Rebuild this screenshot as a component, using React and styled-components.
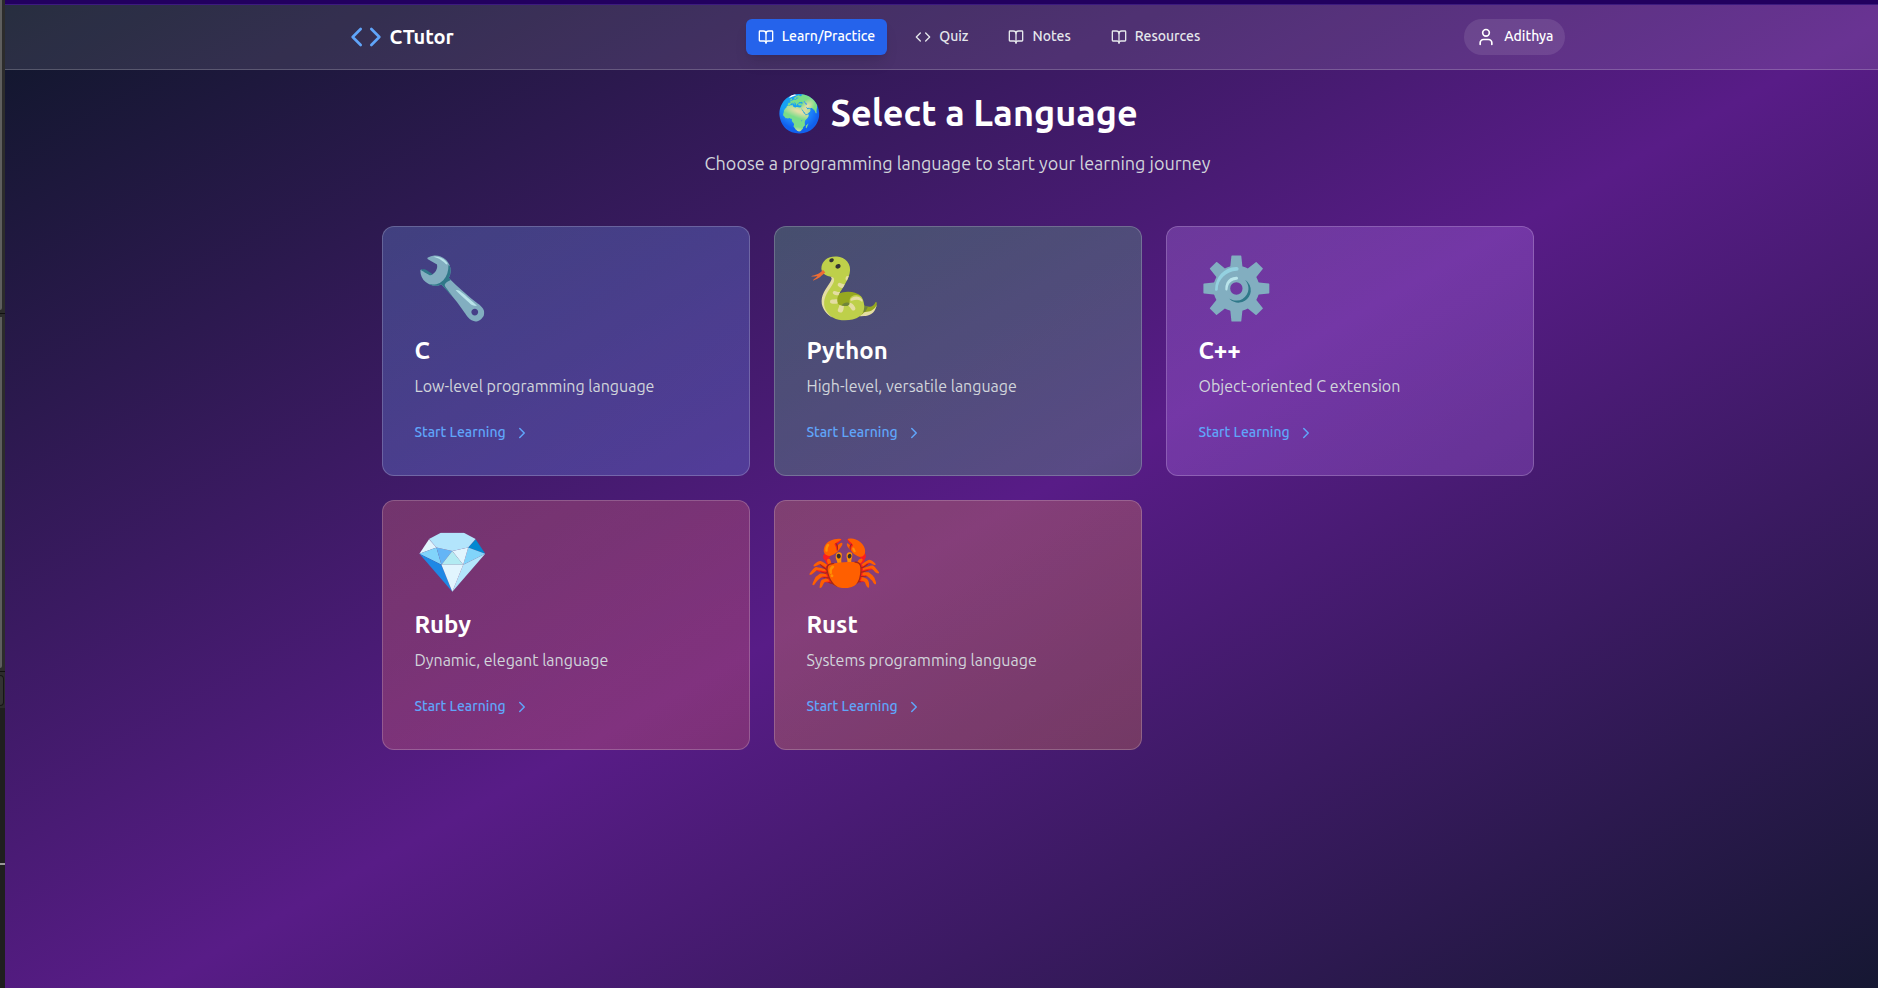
import React from "react";
import styled, { createGlobalStyle } from "styled-components";
import { BookOpen, ChevronRight, Code, User } from "lucide-react";

const GlobalStyle = createGlobalStyle`
  *, *::before, *::after { box-sizing: border-box; }
  body { margin: 0; background: #1f1f1f; }
  h1, h2, p { margin: 0; }
`;

const Screen = styled.div`
  display: flex;
  width: 100%;
  height: 988px;
  overflow: hidden;
  font-family: Ubuntu, "Open Sans", "Noto Color Emoji", sans-serif;
  font-size: 16px;
  line-height: 24px;
  color: #fff;
`;

const EdgeStrip = styled.div`
  flex: none;
  display: flex;
  flex-direction: column;
  width: 5px;
  background: #1f1f1f;
`;

const EdgeDock = styled.div`
  display: flex;
  flex-direction: column;
  gap: 3px;
  height: 708px;
  background: #2c2c2c;
`;

const EdgePanel = styled.div`
  width: 2px;
  height: ${(p) => p.$height}px;
  background: #5e5e5e;
  border-bottom-right-radius: 2px;
`;

const EdgeDivider = styled.div`
  height: 1px;
  background: #111;
`;

const EdgeTab = styled.div`
  width: 4px;
  height: 31px;
  background: #333;
  border: solid #161616;
  border-width: 1px 1px 1px 0;
  border-radius: 0 4px 4px 0;
`;

const EdgeMark = styled.div`
  height: 2px;
  margin-top: 155px;
  background: #989898;
`;

const BrowserPane = styled.div`
  flex: none;
  display: flex;
  flex-direction: column;
  width: 1905px;
`;

const WindowBar = styled.div`
  flex: none;
  height: 5px;
  background: #22005f;
  border-bottom: 1px solid #3d1a7f;
`;

const Page = styled.div`
  flex: none;
  height: 1064px;
  background: linear-gradient(to bottom right, #0f172a, #581c87, #0f172a);
`;

const Header = styled.header`
  height: 65px;
  background: rgba(255, 255, 255, 0.1);
  border-bottom: 1px solid rgba(255, 255, 255, 0.2);
`;

const HeaderInner = styled.div`
  display: flex;
  align-items: center;
  justify-content: space-between;
  max-width: 1280px;
  height: 64px;
  margin: 0 auto;
  padding: 0 32px;
`;

const Brand = styled.div`
  display: flex;
  align-items: center;
  gap: 8px;
  font-size: 20px;
  line-height: 28px;
  font-weight: 700;

  svg { color: #60a5fa; }
`;

const Nav = styled.nav`
  display: flex;
  gap: 16px;
  margin-left: 40px;
`;

const NavItem = styled.a`
  display: flex;
  align-items: center;
  gap: 8px;
  height: 36px;
  padding: 0 12px;
  border-radius: 6px;
  font-size: 14px;
  line-height: 20px;
  font-weight: 500;
  color: ${(p) => (p.$active ? "#fff" : "#e5e7eb")};
  background: ${(p) => (p.$active ? "#2563eb" : "transparent")};
  box-shadow: ${(p) =>
    p.$active
      ? "0 10px 15px -3px rgba(0,0,0,0.1), 0 4px 6px -4px rgba(0,0,0,0.1)"
      : "none"};
`;

const Label = styled.span`
  padding-bottom: 2px;
`;

const UserPill = styled.div`
  display: flex;
  align-items: center;
  gap: 8px;
  height: 36px;
  padding: 0 12px;
  border-radius: 18px;
  background: rgba(255, 255, 255, 0.1);
  font-size: 14px;
  line-height: 20px;
  font-weight: 500;
`;

const Main = styled.main`
  max-width: 1152px;
  margin: 0 auto;
  padding-top: 23px;
`;

const Intro = styled.div`
  margin-bottom: 49px;
  text-align: center;
`;

const Title = styled.h1`
  margin-bottom: 16px;
  font-size: 36px;
  line-height: 40px;
  font-weight: 700;
`;

const Subtitle = styled.p`
  font-size: 18px;
  line-height: 28px;
  color: #d1d5db;
`;

const CardGrid = styled.div`
  display: grid;
  grid-template-columns: repeat(3, 1fr);
  gap: 24px;
`;

const Card = styled.article`
  height: 250px;
  padding: 30px 32px 32px;
  border: 1px solid rgba(255, 255, 255, 0.2);
  border-radius: 12px;
  background:
    linear-gradient(to bottom right, ${(p) => p.$from}, ${(p) => p.$to}),
    rgba(255, 255, 255, 0.1);
`;

const CardEmoji = styled.div`
  height: 60px;
  margin-bottom: 18px;
  padding-left: 1px;
  font-size: 60px;
  line-height: 60px;
`;

const CardTitle = styled.h2`
  margin-bottom: 7px;
  font-size: 24px;
  line-height: 32px;
  font-weight: 700;
`;

const CardText = styled.p`
  margin-bottom: 25px;
  color: #d1d5db;
`;

const CardLink = styled.a`
  display: flex;
  align-items: center;
  gap: 7.5px;
  height: 20px;
  font-size: 14px;
  line-height: 20px;
  font-weight: 500;
  color: #60a5fa;
`;

const navItems = [
  { label: "Learn/Practice", Icon: BookOpen, active: true },
  { label: "Quiz", Icon: Code },
  { label: "Notes", Icon: BookOpen },
  { label: "Resources", Icon: BookOpen },
];

const languages = [
  { name: "C", emoji: "🔧", text: "Low-level programming language", from: "rgba(59,130,246,.2)", to: "rgba(37,99,235,.2)" },
  { name: "Python", emoji: "🐍", text: "High-level, versatile language", from: "rgba(34,197,94,.2)", to: "rgba(22,163,74,.2)" },
  { name: "C++", emoji: "⚙️", text: "Object-oriented C extension", from: "rgba(168,85,247,.2)", to: "rgba(147,51,234,.2)" },
  { name: "Ruby", emoji: "💎", text: "Dynamic, elegant language", from: "rgba(239,68,68,.2)", to: "rgba(220,38,38,.2)" },
  { name: "Rust", emoji: "🦀", text: "Systems programming language", from: "rgba(249,115,22,.2)", to: "rgba(234,88,12,.2)" },
];

export default function App() {
  return (
    <>
      <GlobalStyle />
      <Screen>
        <EdgeStrip>
          <EdgeDock>
            <EdgePanel $height={310} />
            <EdgeDivider />
            <EdgePanel $height={351} />
            <EdgeDivider />
            <EdgeTab />
          </EdgeDock>
          <EdgeMark />
        </EdgeStrip>
        <BrowserPane>
          <WindowBar />
          <Page>
            <Header>
              <HeaderInner>
                <Brand>
                  <Code size={32} />
                  <span>CTutor</span>
                </Brand>
                <Nav>
                  {navItems.map(({ label, Icon, active }) => (
                    <NavItem key={label} $active={active}>
                      <Icon size={16} />
                      <Label>{label}</Label>
                    </NavItem>
                  ))}
                </Nav>
                <UserPill>
                  <User size={20} />
                  <Label>Adithya</Label>
                </UserPill>
              </HeaderInner>
            </Header>
            <Main>
              <Intro>
                <Title>🌍 Select a Language</Title>
                <Subtitle>Choose a programming language to start your learning journey</Subtitle>
              </Intro>
              <CardGrid>
                {languages.map((l) => (
                  <Card key={l.name} $from={l.from} $to={l.to}>
                    <CardEmoji>{l.emoji}</CardEmoji>
                    <CardTitle>{l.name}</CardTitle>
                    <CardText>{l.text}</CardText>
                    <CardLink>
                      <Label>Start Learning</Label>
                      <ChevronRight size={18} />
                    </CardLink>
                  </Card>
                ))}
              </CardGrid>
            </Main>
          </Page>
        </BrowserPane>
      </Screen>
    </>
  );
}
